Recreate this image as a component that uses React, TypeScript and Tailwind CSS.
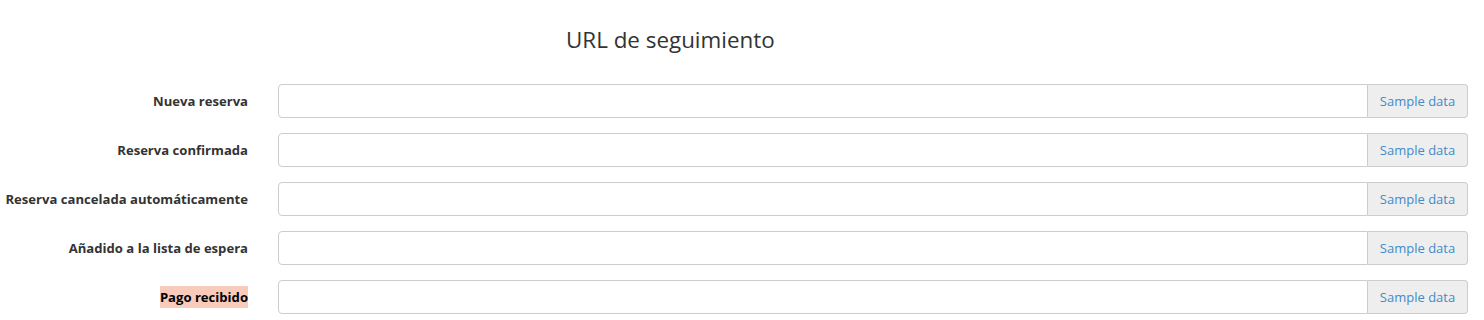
const rows = [
  { label: 'Nueva reserva' },
  { label: 'Reserva confirmada' },
  { label: 'Reserva cancelada automáticamente' },
  { label: 'Añadido a la lista de espera' },
  { label: 'Pago recibido', highlight: true },
]

export default function App() {
  return (
    <div className="w-[1484px] h-[320px] bg-white font-['Open_Sans',sans-serif] text-[#333]">
      {/* Header */}
      <div className="pt-[25px] pl-[566px] h-[84px]">
        <h2 className="text-[22.4px] leading-[30px] font-normal text-[#333]">URL de seguimiento</h2>
      </div>

      {/* Webhook rows */}
      <div className="flex flex-col gap-[15px] pr-[16px]">
        {rows.map((row, i) => (
          <div key={i} className="flex items-center h-[34px]">
            <div className="w-[248px] shrink-0 flex justify-end">
              <label
                className={`text-[13.1px] font-bold leading-[22px] text-[#333] ${
                  row.highlight ? 'bg-[#f8cbbb] text-black' : ''
                }`}
              >
                {row.label}
              </label>
            </div>
            <div className="ml-[30px] flex flex-1 h-[34px]">
              <input
                type="text"
                className="flex-1 h-full border border-[#ccc] rounded-l-[4px] px-3 text-[13px] outline-none"
              />
              <button className="w-[100px] h-full pt-px border border-l-0 border-[#ccc] rounded-r-[4px] bg-[#eee] text-[13px] text-[#428bca]">
                Sample data
              </button>
            </div>
          </div>
        ))}
      </div>
    </div>
  )
}
